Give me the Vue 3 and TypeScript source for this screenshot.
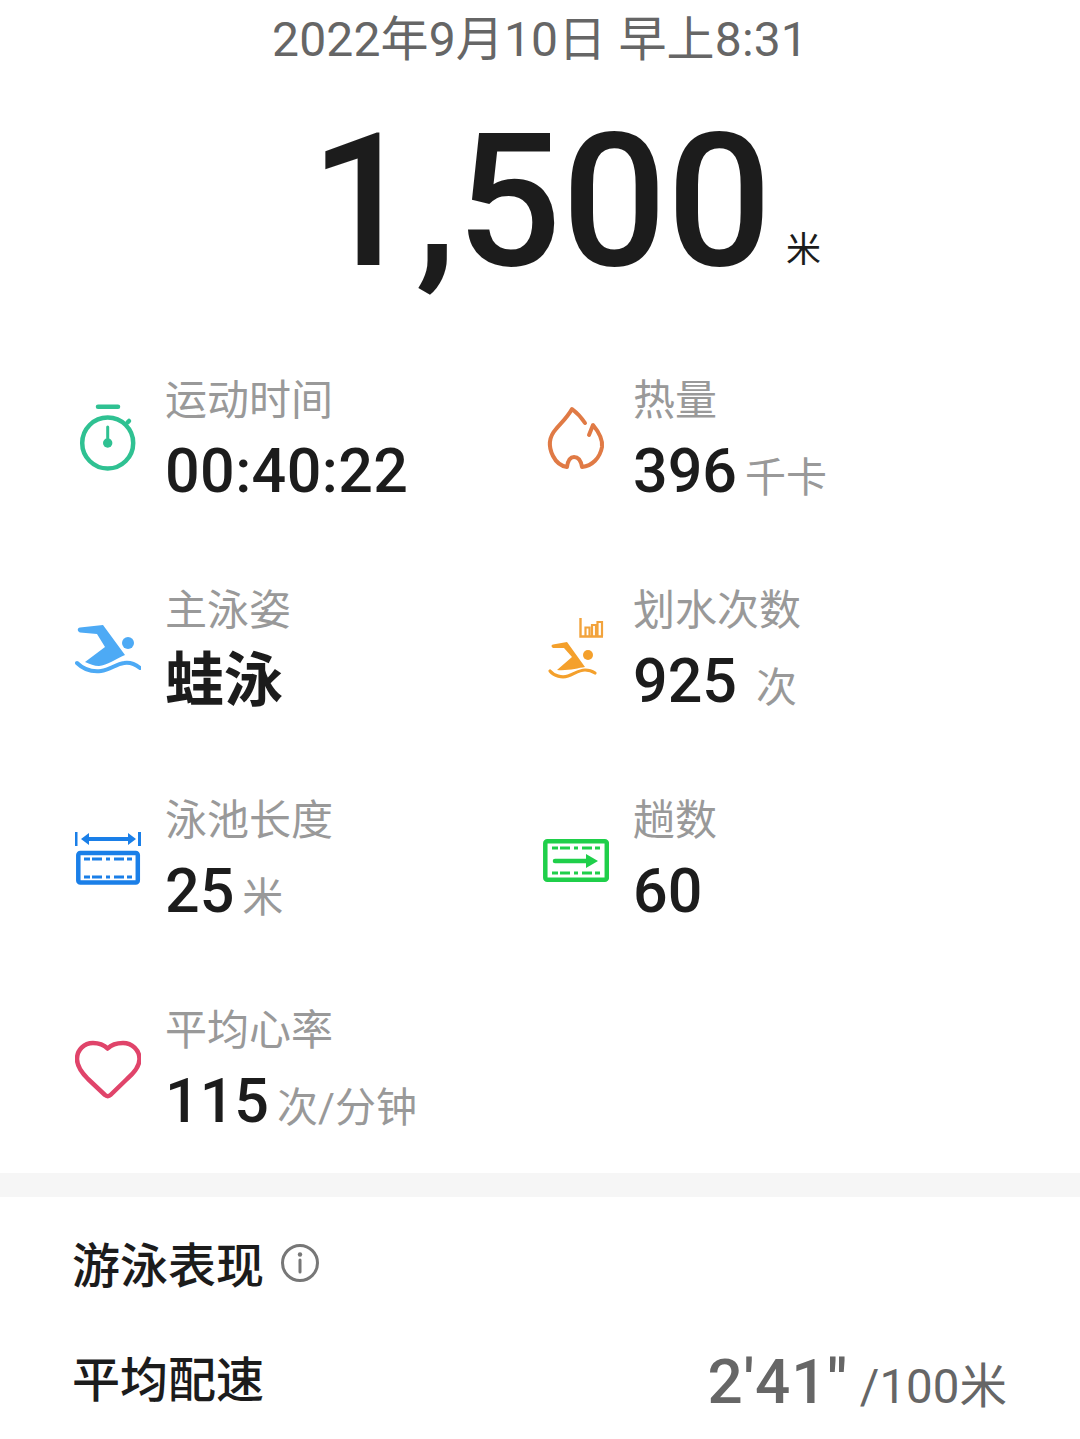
<template>
  <div class="page">
    <div class="date">2022年9月10日 早上8:31</div>
    <div class="total">
      <span class="total-num">1,500</span>
      <span class="total-unit">米</span>
    </div>

    <div class="stats">
      <div class="stat">
        <svg class="icon" viewBox="75 400 66 76">
          <g fill="none" stroke="#2fc192" stroke-width="4.500" stroke-linecap="round">
            <path d="M98 406.700h20" />
            <circle cx="107.700" cy="443" r="25.500" />
            <path d="M127.500 422.500l1.500-1.500" />
            <path d="M107.700 427v11" stroke-width="3" />
          </g>
          <circle cx="107.700" cy="443" r="4.700" fill="#2fc192" />
        </svg>
        <div>
          <div class="label">运动时间</div>
          <div class="value value-time">00:40:22</div>
        </div>
      </div>
      <div class="stat">
        <svg class="icon" viewBox="543 400 66 76">
          <path
            d="M585 423C581 417 576 412 572 409C567 418 560 424 556 429C548 438 549 448 553 456C556 462 561 466 567 467C568 460 570 457 574 457C579 457 581 461 582 467C592 466 600 458 602 447C603 439 598 431 593 425L589 435"
            fill="none"
            stroke="#e07a45"
            stroke-width="4"
            stroke-linecap="round"
            stroke-linejoin="round"
          />
        </svg>
        <div>
          <div class="label">热量</div>
          <div class="value">396<span class="unit">千卡</span></div>
        </div>
      </div>
      <div class="stat">
        <svg class="icon" viewBox="75 610 66 76">
          <path d="M80 627.500L103 625L125 655C116 659 107 665 99 666C94 666 90 664 85 662L105 647L97 634L80 632.500C77 631 77 628 80 627.500Z" fill="#4daaf5" />
          <circle cx="128" cy="643" r="6" fill="#4daaf5" />
          <path d="M77 663C84 670 92 672 101 671C110 670 116 664 124 663C130 662 135 664 140 668" fill="none" stroke="#4daaf5" stroke-width="4" stroke-linecap="round" />
        </svg>
        <div>
          <div class="label">主泳姿</div>
          <div class="value value-cn">蛙泳</div>
        </div>
      </div>
      <div class="stat">
        <svg class="icon" viewBox="543 610 66 76">
          <path d="M580.500 618V636.500H603" fill="none" stroke="#f2a33c" stroke-width="2.400" />
          <path d="M585.500 636V627.500H589.500V636M592 636V625H596V636M597.500 636V622H602V636" fill="none" stroke="#f2a33c" stroke-width="2.200" />
          <path d="M553 644.500L567 642L585 667C578 668 568 671 557 670L572 657L564 648L553 648C551 647 551 645 553 644.500Z" fill="#f4a02c" />
          <circle cx="588" cy="655" r="5" fill="#f4a02c" />
          <path d="M550 671C554 676 562 678 568 676C574 674 579 670 585 670C589 670 592 671 595 673" fill="none" stroke="#f4a02c" stroke-width="3.200" stroke-linecap="round" />
        </svg>
        <div>
          <div class="label">划水次数</div>
          <div class="value">925<span class="unit unit-gap">次</span></div>
        </div>
      </div>
      <div class="stat">
        <svg class="icon" viewBox="75 820 66 76">
          <g stroke="#1a7fe8" fill="none">
            <path d="M76 832v14M139.500 832v14" stroke-width="3" />
            <path d="M86 839h46" stroke-width="4" />
            <rect x="78.300" y="853" width="59.500" height="29.500" rx="2" stroke-width="4.500" />
            <path d="M84 859h48M84 877h48" stroke-width="3" stroke-dasharray="6 2 10 4 4 4 10 3 5" />
          </g>
          <path d="M81 839l8-6v12zM136 839l-8-6v12z" fill="#1a7fe8" />
        </svg>
        <div>
          <div class="label">泳池长度</div>
          <div class="value">25<span class="unit">米</span></div>
        </div>
      </div>
      <div class="stat">
        <svg class="icon" viewBox="543 820 66 76">
          <g stroke="#1fcf4a" fill="none">
            <rect x="545.300" y="841.300" width="61.500" height="38.500" rx="2" stroke-width="4.500" />
            <path d="M552 848h48M552 873h48" stroke-width="3" stroke-dasharray="6 2 10 4 4 4 10 3 5" />
            <path d="M555 861h34" stroke-width="4.500" stroke-linecap="round" />
          </g>
          <path d="M586 854l12 7-12 7z" fill="#1fcf4a" />
        </svg>
        <div>
          <div class="label">趟数</div>
          <div class="value">60</div>
        </div>
      </div>
      <div class="stat">
        <svg class="icon" viewBox="75 1030 66 76">
          <path
            d="M107.700 1048.500C103 1044 98 1043 93 1043C84 1043 77 1050 77 1059C77 1067 82 1073 88 1079L105 1095C106.500 1096.500 109 1096.500 110.500 1095L127 1079C134 1073 139.500 1067 139.500 1059C139.500 1050 132 1043 123 1043C118 1043 112 1044 107.700 1048.500Z"
            fill="none"
            stroke="#e0446a"
            stroke-width="4.500"
            stroke-linejoin="round"
          />
        </svg>
        <div>
          <div class="label">平均心率</div>
          <div class="value">115<span class="unit">次/分钟</span></div>
        </div>
      </div>
    </div>

    <div class="band"></div>

    <div class="perf">
      <div class="perf-title">
        <span>游泳表现</span>
        <svg class="info" viewBox="0 0 40 40">
          <circle cx="20" cy="20" r="17.500" fill="none" stroke="#777" stroke-width="3" />
          <circle cx="20" cy="11.500" r="2.200" fill="#777" />
          <path d="M20 17v12" fill="none" stroke="#777" stroke-width="3" stroke-linecap="round" />
        </svg>
      </div>
      <div class="perf-row">
        <span class="perf-name">平均配速</span>
        <span class="perf-value">2'41''<span class="perf-unit">/100米</span></span>
      </div>
    </div>
  </div>
</template>

<script setup lang="ts">
</script>

<style>
body {
  background: #fff;
}
</style>

<style scoped>
.page {
  width: 1080px;
  height: 1439px;
  overflow: hidden;
  background: #fff;
  font-family: Roboto, "Noto Sans CJK SC", sans-serif;
  color: #1c1c1c;
}

.date {
  height: 80px;
  line-height: 80px;
  text-align: center;
  font-size: 48px;
  letter-spacing: 0.15px;
  color: #666;
}

.total {
  height: 296px;
  padding-left: 51px;
  text-align: center;
  line-height: 244px;
}

.total-num {
  font-size: 185px;
  font-weight: 500;
}

.total-unit {
  margin-left: 14px;
  font-size: 35px;
  vertical-align: 3px;
}

.stats {
  display: grid;
  grid-template-columns: 468px 1fr;
  grid-auto-rows: 210px;
  padding-left: 75px;
}

.stat {
  display: flex;
  align-items: flex-start;
  gap: 24px;
}

.icon {
  width: 66px;
  height: 76px;
  margin-top: 24px;
  flex: none;
}

.label {
  height: 50px;
  line-height: 50px;
  font-size: 42px;
  color: #999;
}

.value {
  height: 76px;
  margin-top: 7px;
  line-height: 76px;
  font-size: 61px;
  font-weight: 500;
  white-space: nowrap;
}

.value-time {
  letter-spacing: 0.4px;
}

.value-cn {
  font-size: 59px;
  font-weight: 700;
}

.unit {
  margin-left: 8px;
  font-size: 41px;
  font-weight: 400;
  color: #999;
}

.unit-gap {
  margin-left: 19px;
}

.band {
  height: 24px;
  margin-top: -43px;
  background: #f6f6f6;
}

.perf {
  padding: 0 73px 0 72px;
}

.perf-title {
  display: flex;
  align-items: center;
  gap: 16px;
  height: 130px;
  font-size: 48px;
  font-weight: 500;
}

.info {
  width: 40px;
  height: 40px;
  margin-top: 2px;
}

.perf-row {
  display: flex;
  justify-content: space-between;
  align-items: flex-start;
  margin-top: 19px;
  line-height: 70px;
}

.perf-name {
  font-size: 48px;
  font-weight: 500;
}

.perf-value {
  margin-top: 1px;
  font-size: 62px;
  font-weight: 500;
  letter-spacing: 1px;
  color: #666;
}

.perf-unit {
  margin-left: 12px;
  font-size: 47.500px;
  font-weight: 400;
  letter-spacing: 0;
}
</style>
